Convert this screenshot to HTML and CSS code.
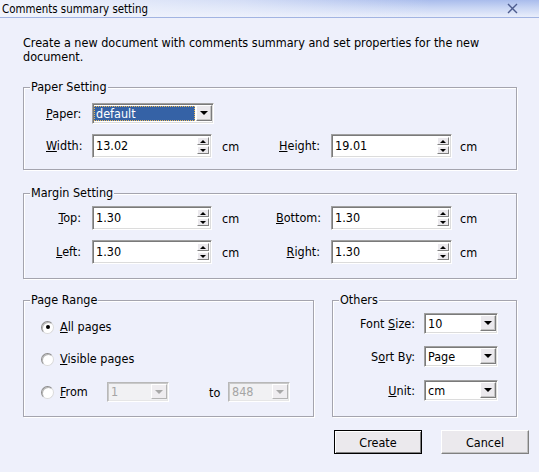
FILE: index.html
```html
<!DOCTYPE html>
<html>
<head>
<meta charset="utf-8">
<link rel="stylesheet" href="styles.css">
</head>
<body>
<div class="titlebar">
  <span class="title">Comments summary setting</span>
  <svg class="close" width="11" height="11" viewBox="0 0 11 11"><path d="M1 1 L10 10 M10 1 L1 10" stroke="#4d5c8e" stroke-width="1.4" fill="none"/></svg>
</div>
<div class="content">
  <p class="desc">Create a new document with comments summary and set properties for the new document.</p>

  <div class="group paper">
    <span class="legend">Paper Setting</span>
    <div class="grid">
      <span class="lbl left"><u>P</u>aper:</span>
      <div class="combo wide"><span class="val sel">default</span><span class="dbtn"><i class="tri"></i></span></div>
      <span></span><span></span><span></span><span></span>
      <span class="lbl left"><u>W</u>idth:</span>
      <div class="spin"><span class="val">13.02</span><span class="sbtns"><span class="sb"><i class="up"></i></span><span class="sb"><i class="dn"></i></span></span></div>
      <span class="unit">cm</span>
      <span class="lbl right"><u>H</u>eight:</span>
      <div class="spin"><span class="val">19.01</span><span class="sbtns"><span class="sb"><i class="up"></i></span><span class="sb"><i class="dn"></i></span></span></div>
      <span class="unit u2">cm</span>
    </div>
  </div>

  <div class="group margin">
    <span class="legend">Margin Setting</span>
    <div class="grid">
      <span class="lbl right"><u>T</u>op:</span>
      <div class="spin"><span class="val">1.30</span><span class="sbtns"><span class="sb"><i class="up"></i></span><span class="sb"><i class="dn"></i></span></span></div>
      <span class="unit">cm</span>
      <span class="lbl right"><u>B</u>ottom:</span>
      <div class="spin"><span class="val">1.30</span><span class="sbtns"><span class="sb"><i class="up"></i></span><span class="sb"><i class="dn"></i></span></span></div>
      <span class="unit u2">cm</span>
      <span class="lbl right"><u>L</u>eft:</span>
      <div class="spin"><span class="val">1.30</span><span class="sbtns"><span class="sb"><i class="up"></i></span><span class="sb"><i class="dn"></i></span></span></div>
      <span class="unit">cm</span>
      <span class="lbl right"><u>R</u>ight:</span>
      <div class="spin"><span class="val">1.30</span><span class="sbtns"><span class="sb"><i class="up"></i></span><span class="sb"><i class="dn"></i></span></span></div>
      <span class="unit u2">cm</span>
    </div>
  </div>

  <div class="bottom">
    <div class="group range">
      <span class="legend">Page Range</span>
      <div class="radios">
        <div class="rrow"><span class="radio on"></span><span class="rtext"><u>A</u>ll pages</span></div>
        <div class="rrow"><span class="radio"></span><span class="rtext"><u>V</u>isible pages</span></div>
        <div class="rrow">
          <span class="radio"></span><span class="rtext from"><u>F</u>rom</span>
          <div class="combo small dis"><span class="val">1</span><span class="dbtn"><i class="tri"></i></span></div>
          <span class="to">to</span>
          <div class="combo small dis"><span class="val">848</span><span class="dbtn"><i class="tri"></i></span></div>
        </div>
      </div>
    </div>
    <div class="group others">
      <span class="legend">Others</span>
      <div class="orows">
        <div class="orow"><span class="olbl">Font <u>S</u>ize:</span><div class="combo mid"><span class="val">10</span><span class="dbtn"><i class="tri"></i></span></div></div>
        <div class="orow"><span class="olbl">S<u>o</u>rt By:</span><div class="combo mid"><span class="val">Page</span><span class="dbtn"><i class="tri"></i></span></div></div>
        <div class="orow"><span class="olbl"><u>U</u>nit:</span><div class="combo mid"><span class="val">cm</span><span class="dbtn"><i class="tri"></i></span></div></div>
      </div>
    </div>
  </div>
</div>
<div class="buttons">
  <button class="btn default">Create</button>
  <button class="btn">Cancel</button>
</div>
</body>
</html>
```
FILE: styles.css
```css
html, body {
  margin: 0;
  padding: 0;
}
body {
  width: 539px;
  height: 472px;
  overflow: hidden;
  background: #eef0fb;
  font-family: "DejaVu Sans Condensed", "DejaVu Sans", sans-serif;
  font-size: 12.5px;
  color: #000;
}
u { text-decoration: underline; text-underline-offset: 1px; }

.titlebar {
  height: 17px;
  border-bottom: 1px solid #a2b4e2;
  display: flex;
  align-items: center;
  justify-content: space-between;
  padding: 0 21px 0 2px;
  background:
    linear-gradient(to right, #f0f3fc 0%, rgba(240,243,252,0.6) 45%, rgba(240,243,252,0) 80%),
    linear-gradient(to bottom, #a9bcec 0%, #c8d5f4 45%, #e9eefb 100%);
}
.title { line-height: 14px; font-size: 11.4px; }
.close { display: block; }

.content {
  padding: 18px 22px 0 23px;
}
.desc {
  margin: 0 0 23px;
  line-height: 14px;
  padding-right: 10px;
}

.group {
  position: relative;
  border: 1px solid #a4a4ae;
  box-shadow: inset 1px 1px 0 #fff, 1px 1px 0 #fff;
}
.legend {
  position: absolute;
  top: -8px;
  left: 6px;
  padding: 0 1px;
  line-height: 14px;
  background: #eef0fb;
}

.grid {
  display: grid;
  grid-template-columns: 46px 120px 64px 55px 121px auto;
  align-items: center;
  row-gap: 10px;
  padding-left: 22px;
}
.paper .grid { padding-top: 15px; padding-bottom: 11px; }
.margin { margin-top: 23px; }
.margin .grid { padding-top: 12px; padding-bottom: 14px; }

.lbl { line-height: 14px; white-space: nowrap; }
.lbl.left { text-align: left; }
.lbl.right { text-align: right; padding-right: 11px; }
.unit { padding-left: 10px; }
.unit.u2 { padding-left: 8px; }

/* sunken field */
.spin, .combo {
  box-sizing: border-box;
  display: flex;
  align-items: stretch;
  background: #fff;
  border-style: solid;
  border-width: 1px;
  border-color: #a0a0a0 #ffffff #ffffff #a0a0a0;
  box-shadow: inset 1px 1px 0 #7a7a7a, inset -1px -1px 0 #dcdcdc;
  padding: 1px;
}
.spin { height: 24px; }
.val {
  flex: 1;
  display: flex;
  align-items: center;
  padding-left: 3px;
  line-height: 14px;
  white-space: nowrap;
}
.spin .val { padding-left: 2px; }
.sbtns {
  width: 12px;
  display: flex;
  flex-direction: column;
  gap: 1px;
  padding: 1px 1px 2px 0;
}
.sb {
  flex: 1;
  display: flex;
  align-items: center;
  justify-content: center;
  background: #ebe9ed;
  border: 1px solid;
  border-color: #fff #808080 #808080 #fff;
}
.up, .dn {
  display: block;
  width: 0;
  height: 0;
  border-left: 3px solid transparent;
  border-right: 3px solid transparent;
}
.up { border-bottom: 3px solid #000; }
.dn { border-top: 3px solid #000; }

.combo { height: 21px; }
.combo.wide { width: 122px; }
.combo .val { padding-left: 2px; }
.sel {
  background: #3562a6;
  color: #fff;
  outline: 1px dotted #e8b85a;
  outline-offset: -1px;
  margin: 1px 1px 1px 0;
}
.dbtn {
  width: 16px;
  display: flex;
  align-items: center;
  justify-content: center;
  background: #ebe9ed;
  border: 1px solid;
  border-color: #fff #7c7c7c #7c7c7c #fff;
  box-shadow: inset -1px -1px 0 #c4c4c4;
  box-sizing: border-box;
  margin: 0 0 1px 0;
}
.tri {
  display: block;
  width: 0;
  height: 0;
  border-left: 4px solid transparent;
  border-right: 4px solid transparent;
  border-top: 4px solid #000;
}

.bottom {
  display: flex;
  gap: 18px;
  margin-top: 21px;
}
.range { width: 291px; box-sizing: border-box; }
.others { width: 185px; box-sizing: border-box; }

.radios {
  display: flex;
  flex-direction: column;
  padding: 16px 0 14px 17px;
}
.rrow {
  height: 20px;
  display: flex;
  align-items: center;
}
.rrow:nth-child(2) { margin-top: 12px; }
.rrow:nth-child(3) { margin-top: 13px; }
.radio {
  box-sizing: border-box;
  width: 13px;
  height: 13px;
  border-radius: 50%;
  background: #fff;
  border: 1px solid;
  border-color: #8c8c8c #dadada #dadada #8c8c8c;
  box-shadow: inset 1px 1px 0 #b8b8b8;
  display: flex;
  align-items: center;
  justify-content: center;
  margin-right: 6px;
}
.radio.on::after {
  content: "";
  width: 4px;
  height: 4px;
  border-radius: 50%;
  background: #000;
}
.rtext { line-height: 14px; }
.from { width: 47px; }
.combo.small { width: 62px; height: 20px; }
.combo.dis { background: #f1f1f3; color: #a5a5a5; border-color: #b8b8b8 #fff #fff #b8b8b8; box-shadow: inset 1px 1px 0 #c9c9c9, inset -1px -1px 0 #e6e6e6; }
.combo.dis .dbtn { border-color: #fff #b4b4b4 #b4b4b4 #fff; box-shadow: none; background: #efedf0; }
.combo.dis .tri { border-top-color: #a8a8a8; }
.to { margin-left: 40px; width: 19px; }

.orows {
  padding: 12px 0 15px 0;
  display: flex;
  flex-direction: column;
}
.orow {
  display: flex;
  align-items: center;
  height: 21px;
}
.orow:nth-child(2) { margin-top: 12px; }
.orow:nth-child(3) { margin-top: 13px; }
.olbl {
  width: 82px;
  text-align: right;
  margin-right: 9px;
  white-space: nowrap;
}
.combo.mid { width: 74px; }

.buttons {
  display: flex;
  justify-content: flex-end;
  gap: 19px;
  padding: 13px 10px 0 0;
}
.btn {
  box-sizing: border-box;
  width: 88px;
  height: 24px;
  margin: 0;
  padding: 0;
  font-family: inherit;
  font-size: 12.5px;
  color: #000;
  background: #ebe9ed;
  border: 1px solid;
  border-color: #fff #808080 #808080 #fff;
  box-shadow: inset -1px -1px 0 #c0c0c0;
}
.btn.default {
  border: 1px solid #000;
  box-shadow: inset 1px 1px 0 #fff, inset -1px -1px 0 #808080;
}
```
